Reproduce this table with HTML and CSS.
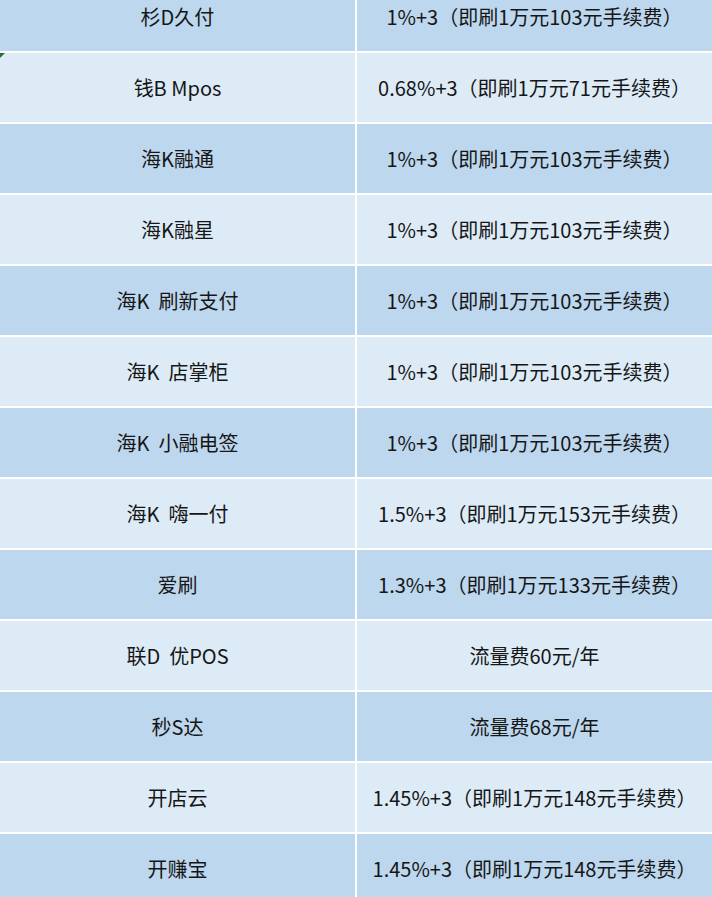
FILE: index.html
```html
<!DOCTYPE html>
<html lang="zh-CN">
<head>
<meta charset="utf-8">
<title>费率表</title>
<link rel="stylesheet" href="styles.css">
</head>
<body>
<div class="sheet">
  <span class="marker"></span>
  <table class="rates">
    <tbody>
      <tr class="dark"><td>杉D久付</td><td>1%+3（即刷1万元103元手续费）</td></tr>
      <tr class="light"><td>钱B Mpos</td><td>0.68%+3（即刷1万元71元手续费）</td></tr>
      <tr class="dark"><td>海K融通</td><td>1%+3（即刷1万元103元手续费）</td></tr>
      <tr class="light"><td>海K融星</td><td>1%+3（即刷1万元103元手续费）</td></tr>
      <tr class="dark"><td>海K  刷新支付</td><td>1%+3（即刷1万元103元手续费）</td></tr>
      <tr class="light"><td>海K  店掌柜</td><td>1%+3（即刷1万元103元手续费）</td></tr>
      <tr class="dark"><td>海K  小融电签</td><td>1%+3（即刷1万元103元手续费）</td></tr>
      <tr class="light"><td>海K  嗨一付</td><td>1.5%+3（即刷1万元153元手续费）</td></tr>
      <tr class="dark"><td>爱刷</td><td>1.3%+3（即刷1万元133元手续费）</td></tr>
      <tr class="light"><td>联D  优POS</td><td>流量费60元/年</td></tr>
      <tr class="dark"><td>秒S达</td><td>流量费68元/年</td></tr>
      <tr class="light"><td>开店云</td><td>1.45%+3（即刷1万元148元手续费）</td></tr>
      <tr class="dark"><td>开赚宝</td><td>1.45%+3（即刷1万元148元手续费）</td></tr>
    </tbody>
  </table>
</div>
</body>
</html>
```
FILE: styles.css
```css
html, body {
  margin: 0;
  padding: 0;
  background: #ddebf7;
}
body {
  font-family: "Noto Sans CJK SC", "Noto Sans", sans-serif;
  color: #161616;
  overflow: hidden;
}
.sheet {
  position: relative;
  margin-top: -18px;
}
.marker {
  position: absolute;
  left: 0;
  top: 71px;
  width: 0;
  height: 0;
  border-top: 5px solid #2e6b3a;
  border-right: 5px solid transparent;
}
.rates {
  width: 100%;
  border-collapse: collapse;
  table-layout: fixed;
}
.rates td {
  height: 69px;
  padding: 0;
  text-align: center;
  vertical-align: middle;
  font-size: 20px;
  white-space: pre;
  border-bottom: 2px solid #ffffff;
}
.rates td:first-child {
  width: 355px;
  border-right: 2px solid #ffffff;
}
.dark td { background: #bdd7ee; }
.light td { background: #ddebf7; }
```
